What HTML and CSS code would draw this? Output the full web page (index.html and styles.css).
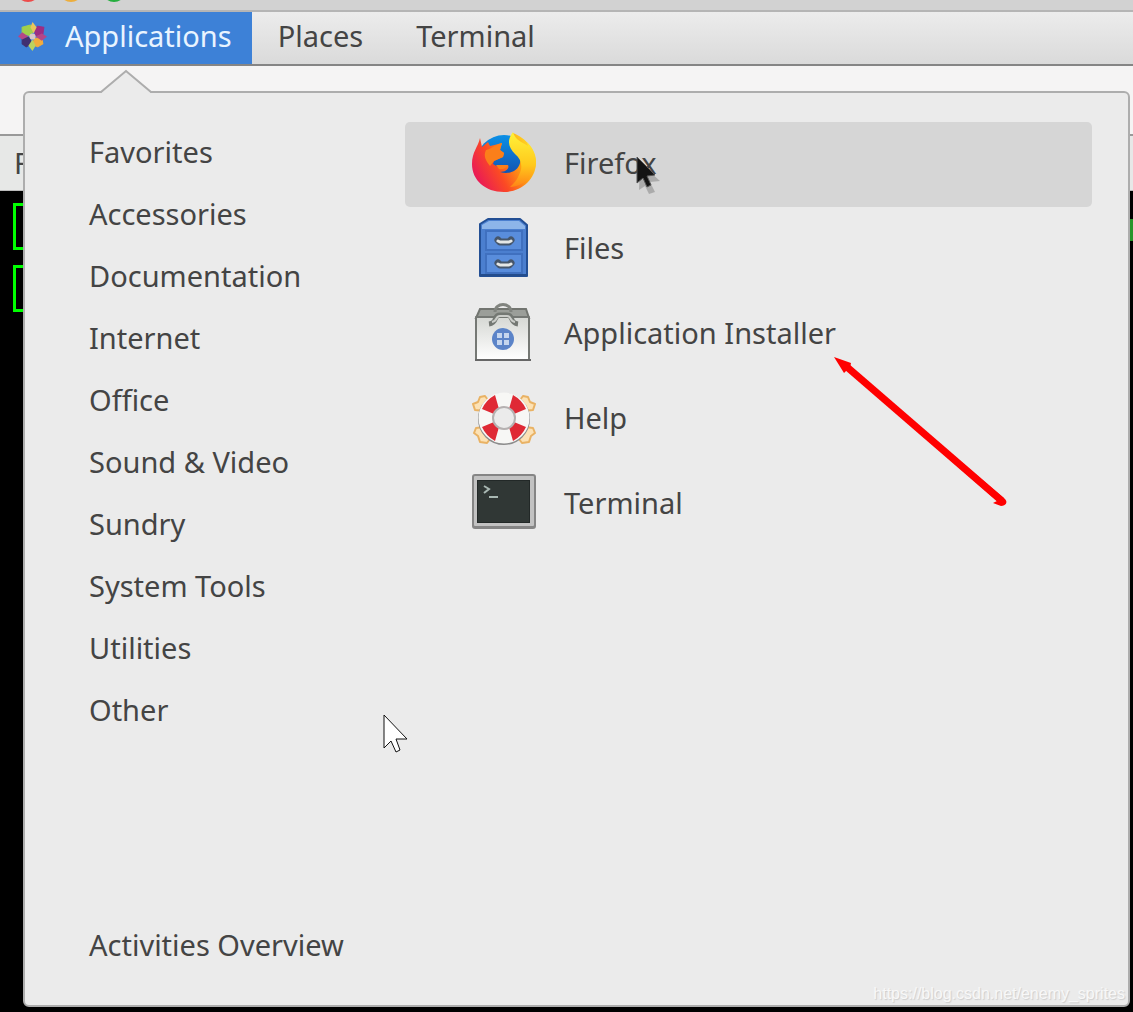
FILE: index.html
```html
<!DOCTYPE html>
<html lang="en">
<head>
<meta charset="utf-8">
<title>Applications menu</title>
<link rel="stylesheet" href="styles.css">
</head>
<body>
<div class="titlebar"><i class="light close"></i><i class="light minimize"></i><i class="light expand"></i></div>
<nav class="panel">
  <button class="panel-item active" type="button">
    <svg class="distro" viewBox="0 0 28 28" aria-hidden="true">
      <g stroke-linejoin="round" stroke-width="1">
        <path fill="#a1cf4c" stroke="#a1cf4c" d="M4 5l8-2 2 7-3 3-7-2z"/>
        <path fill="#9d2d83" stroke="#9d2d83" d="M16 8l3-4 6 1-1 7-7 1z"/>
        <path fill="#f2ac3c" stroke="#f2ac3c" d="M16 16l7-1 1 6-5 3-5-2z"/>
        <path fill="#403071" stroke="#403071" d="M4 14l7 1 2 6-5 3-4-3z"/>
      </g>
      <path fill="#eac55a" d="M14 0l4 5-3 6-3-6z"/>
      <path fill="#b44688" d="M28 14l-5 4-6-4 6-3zM0 14l4-4 6 4-6 3z"/>
      <path fill="#bcd35f" d="M14 28l-4-5 4-6 3 6z"/>
      <circle cx="14" cy="14" r="3" fill="#d9c7c9"/>
    </svg>
    <span>Applications</span>
  </button>
  <button class="panel-item" type="button">Places</button>
  <button class="panel-item" type="button">Terminal</button>
</nav>
<main class="stage">
  <div class="window">
    <div class="window-title"></div>
    <div class="window-menu">File</div>
    <div class="console"><div class="prompt"><span class="bracket"></span><span class="prompt-end"></span></div><div class="prompt"><span class="bracket"></span></div></div>
  </div>
  <section class="popover">
    <svg class="pointer" viewBox="0 0 56 26" aria-hidden="true"><path d="M2 26L4 24 28 3 52 24l2 2z" fill="#ebebeb"/><path d="M1 24h2L28 3l25 21h2" fill="none" stroke="#adadad" stroke-width="2"/></svg>
    <nav class="categories">
      <a href="#">Favorites</a>
      <a href="#">Accessories</a>
      <a href="#">Documentation</a>
      <a href="#">Internet</a>
      <a href="#">Office</a>
      <a href="#">Sound &amp; Video</a>
      <a href="#">Sundry</a>
      <a href="#">System Tools</a>
      <a href="#">Utilities</a>
      <a href="#">Other</a>
      <a class="overview" href="#">Activities Overview</a>
    </nav>
    <div class="apps">
      <button class="app selected" type="button">
        <svg viewBox="0 0 66 66" aria-hidden="true">
          <defs>
            <linearGradient id="fox" x1="0" y1="0.7" x2="1" y2="0.2"><stop offset="0" stop-color="#e8165b"/><stop offset=".35" stop-color="#fb4a24"/><stop offset=".65" stop-color="#ff9d12"/><stop offset="1" stop-color="#ffe428"/></linearGradient>
            <linearGradient id="tail" x1="0" y1="0" x2="0" y2="1"><stop offset="0" stop-color="#fff23a"/><stop offset=".6" stop-color="#ffc91c"/><stop offset="1" stop-color="#ff8416"/></linearGradient>
            <linearGradient id="globe" x1="0" y1="0" x2="0" y2="1"><stop offset="0" stop-color="#0b90e6"/><stop offset="1" stop-color="#16399b"/></linearGradient>
          </defs>
          <circle cx="33" cy="33" r="28" fill="url(#globe)"/>
          <path fill="url(#fox)" d="M9 8l2 9 6-5 2 4c5-1 8-2 12-3l-2 7 4 3-1 4-9 4-1 3 5 3 10-2c2 4-3 7-8 7 9 3 18-1 20-9 2-9-3-14-8-18-3-4-2-8 1-12 13 5 23 17 23 31-1 16-15 28-32 28C14 62 1 50 1 34 1 22 7 17 9 8z"/>
          <path fill="url(#tail)" d="M42 2c-7 9-4 16 2 22 7 6 8 13 4 21-2 5-5 8-9 12 15-1 26-12 26-26 0-7-4-14-9-19l1 4c-6-4-13-6-15-14z"/>
          <path fill="#fb7f1a" d="M15 20c5-1 11-6 16-7l-2 7 4 3-1 4-9 4-4 5c-4-5-7-10-4-16zM25 35h12c-2 4-6 5-9 4z"/>
        </svg>
        <span>Firefox</span>
      </button>
      <button class="app" type="button">
        <svg viewBox="0 0 66 66" aria-hidden="true">
          <path d="M9 9l8-5h32l7 6v51H9z" fill="#4b7fcf" stroke="#234f94" stroke-width="2" stroke-linejoin="round"/>
          <path d="M11 10l7-4h30l6 5v3H11z" fill="#8db5e9"/><path d="M9 60h47" stroke="#244d8c" stroke-width="2"/>
          <path d="M15 16h36v19H15zm0 23h36v19H15z" fill="#598ddc" stroke="#3f70bf" stroke-width="2"/>
          <g fill="none" stroke-linecap="round" stroke-linejoin="round"><path d="M27 25l2 2h9l2-2M27 48l2 2h9l2-2" stroke="#46566b" stroke-width="7"/><path d="M27 26l2 1h9l2-1M27 49l2 1h9l2-1" stroke="#e5e7e6" stroke-width="3"/></g>
        </svg>
        <span>Files</span>
      </button>
      <button class="app" type="button">
        <svg viewBox="0 0 66 66" aria-hidden="true">
          <defs><linearGradient id="bag" x1="0" y1="0" x2="0" y2="1"><stop offset="0" stop-color="#d6d8d4"/><stop offset="1" stop-color="#fff"/></linearGradient></defs>
          <path d="M9 9h46l3 9H5z" fill="#9b9e99" stroke="#727570" stroke-width="2"/>
          <path d="M24 12c0-10 16-10 16 0" fill="none" stroke="#81847f" stroke-width="3"/>
          <path d="M5 17h53v43H5z" fill="url(#bag)" stroke="#757874" stroke-width="2" stroke-linejoin="round"/>
          <path d="M18 24c9-1 4-9 11-9h7c7 0 2 8 11 9" fill="none" stroke="#747873" stroke-width="5"/><path d="M21 22c6-1 3-6 8-6h7c5 0 2 5 8 6" fill="none" stroke="#cbcdc9" stroke-width="2"/>
          <circle cx="32" cy="39" r="11" fill="#5b84c8"/><path d="M26 33h5v5h-5zm7 0h5v5h-5zm-7 7h5v5h-5zm7 0h5v5h-5z" fill="#c5d6ee"/><path d="M4 60h56" stroke="#666" stroke-width="2"/>
        </svg>
        <span>Application Installer</span>
      </button>
      <button class="app" type="button">
        <svg viewBox="0 0 66 66" aria-hidden="true">
          <path d="M20 19l-6-8-5 1-2 5-5 2 2 6 9 1m33-7l6-8 5 1 2 5 5 2-2 6-9 1M13 42l-8 1-2 5 4 3 2 6 7 1 6-8m23 0l6 8 7-1 2-6 4-3-2-5-8-1" fill="#fce2b6" stroke="#e9b264" stroke-width="2" stroke-linejoin="round"/>
          <circle cx="33" cy="34" r="18" fill="none" stroke="#8c8c8c" stroke-width="16"/>
          <circle cx="33" cy="33" r="18" fill="none" stroke="#f7f7f5" stroke-width="15"/>
          <path d="M11 24q4-9 13-14l4 14-5 5zm44 0q-4-9-13-14l-4 14 5 5zM11 42q4 9 13 14l4-14-5-5zm44 0q-4 9-13 14l-4-14 5-5z" fill="#df2935"/>
          <circle cx="33" cy="33" r="11" fill="#ebebeb" stroke="#b5b1b1" stroke-width="2"/>
        </svg>
        <span>Help</span>
      </button>
      <button class="app" type="button">
        <svg viewBox="0 0 66 66" aria-hidden="true">
          <rect x="1" y="4" width="64" height="55" rx="3" fill="#858585"/><rect x="3" y="6" width="60" height="50" rx="1" fill="#c2c2c2"/><rect x="6" y="10" width="53" height="43" fill="#222827"/><rect x="7" y="11" width="51" height="41" fill="#303735"/>
          <path d="M13 16l5 3-5 4M18 27h9" fill="none" stroke="#a9b8b3" stroke-width="2"/>
        </svg>
        <span>Terminal</span>
      </button>
    </div>
    <div class="watermark">https://blog.csdn.net/enemy_sprites</div>
  </section>
</main>
<svg class="overlay guest-cursor" viewBox="0 0 30 38" aria-hidden="true"><path d="M6 7l20 18-10 1 5 10-6 2-4-8-6 4z" fill="#777" opacity=".45"/><path d="M3 1l18 18-8 1 4 9-4 2-4-9-6 5z" fill="#141414" stroke="#555"/></svg>
<svg class="overlay host-cursor" viewBox="0 0 26 40" aria-hidden="true"><path d="M1 1v33l7-7 5 11 4-2-4-11h11z" fill="#fff" stroke="#111"/></svg>
<svg class="overlay arrow" viewBox="0 0 180 156" aria-hidden="true"><path d="M4 7l17 6-1 5L175 149c3 3 1 7-4 7l-8-3 4-2L17 20l-3 3z" fill="#f00"/><path d="M17 17L172 151" stroke="#f00" stroke-width="7"/></svg>
</body>
</html>
```
FILE: styles.css
```css
* { box-sizing: border-box; }
body {
  position: relative;
  display: flex;
  flex-direction: column;
  min-height: 100vh;
  margin: 0;
  overflow-x: hidden;
  background: #000;
  color: #444;
  font: 29px/40px "Noto Sans", "Open Sans", sans-serif;
}
button { border: 0; background: none; color: inherit; font: inherit; }
a { color: inherit; text-decoration: none; }
.titlebar {
  display: flex;
  align-items: flex-end;
  gap: 19px;
  height: 12px;
  padding: 0 16px 8px;
  overflow: hidden;
  background: #d2d2d2;
  border-bottom: 2px solid #b5b5b5;
}
.light { flex: none; width: 24px; height: 24px; border-radius: 50%; }
.close { background: #ed4b4a; }
.minimize { background: #edae3c; }
.expand { background: #25ae3e; }
.panel {
  display: flex;
  height: 54px;
  background: linear-gradient(#ececec, #dadada);
  border-bottom: 2px solid #858585;
}
.panel-item {
  display: flex;
  align-items: center;
  padding: 0 27px 4px 26px;
}
.active {
  gap: 18px;
  padding: 0 20px 4px 18px;
  background: #3d81d7;
  color: #e9f4ff;
}
.distro { width: 29px; height: 29px; }
.stage {
  position: relative;
  display: flex;
  flex: 1;
  padding: 25px 3px 5px 23px;
}
.window {
  position: absolute;
  inset: 0;
  display: flex;
  flex-direction: column;
}
.window-title { height: 70px; background: #f5f4f4; border-bottom: 2px solid #999; }
.window-menu { height: 55px; padding: 7px 14px; background: #e7e8e7; border-bottom: 1px solid #bbb; }
.console { flex: 1; padding-top: 12px; background: #000; }
.prompt { display: flex; justify-content: space-between; height: 62px; padding-left: 13px; }
.bracket { width: 20px; height: 47px; border: 3px solid #0f0; border-right: 0; }
.prompt-end { width: 5px; height: 22px; margin-top: 16px; background: #26952a; }
.popover {
  position: relative;
  display: flex;
  flex: 1;
  padding: 29px 36px 28px 0;
  background: #ebebeb;
  border: 2px solid #adadad;
  border-radius: 6px;
}
.pointer { position: absolute; left: 73px; top: -25px; width: 56px; height: 26px; }
.categories {
  display: flex;
  flex-direction: column;
  flex: 0 0 380px;
}
.categories a { padding: 10px 20px 12px 64px; white-space: nowrap; }
.categories .overview { margin-top: auto; }
.apps { flex: 1; }
.app {
  display: flex;
  align-items: center;
  gap: 27px;
  width: 100%;
  height: 85px;
  padding: 0 66px 3px;
  border-radius: 5px;
  text-align: left;
}
.selected { background: #d6d6d6; }
.app svg { width: 66px; height: 66px; }
.watermark {
  position: absolute;
  right: 3px;
  bottom: 1px;
  color: #f8f8f8;
  font: 16px/20px "Liberation Sans", sans-serif;
  text-shadow: 1px 1px 1px #ccc;
}
.overlay { position: absolute; pointer-events: none; }
.guest-cursor { left: 634px; top: 156px; width: 30px; height: 38px; }
.host-cursor { left: 383px; top: 714px; width: 26px; height: 40px; }
.arrow { left: 830px; top: 350px; width: 180px; height: 156px; }
```
